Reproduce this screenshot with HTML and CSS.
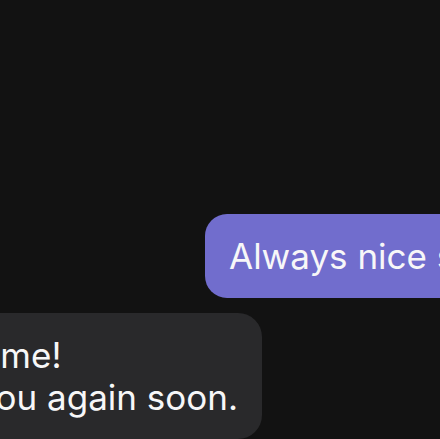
FILE: index.html
```html
<!DOCTYPE html>
<html lang="en">
<head>
<meta charset="utf-8">
<title>Chat</title>
<link rel="stylesheet" href="styles.css">
</head>
<body>
<main class="thread">
  <div class="row row-out">
    <div class="bubble bubble-out">Always nice seeing you!</div>
  </div>
  <div class="row row-in">
    <div class="bubble bubble-in">Thanks for having me!<br>Hoping we'll see you again soon.</div>
  </div>
</main>
</body>
</html>
```

FILE: styles.css
```css
html, body {
  margin: 0;
  padding: 0;
  background: #121212;
}

.thread {
  height: 439px;
  overflow: hidden;
  display: flex;
  flex-direction: column;
  justify-content: flex-end;
  gap: 15px;
  font-family: Inter, "Noto Sans", sans-serif;
  font-size: 35px;
  line-height: 42px;
  color: #f7f7f8;
}

.row {
  display: flex;
}

.row-out {
  padding-left: 205px;
}

.row-in {
  width: 262px;
  justify-content: flex-end;
}

.bubble {
  flex: none;
  padding: 21px 24px;
  white-space: nowrap;
}

.bubble-out {
  background: #716dcd;
  border-radius: 22px;
}

.bubble-in {
  background: #29292b;
  border-radius: 24px;
}
```
